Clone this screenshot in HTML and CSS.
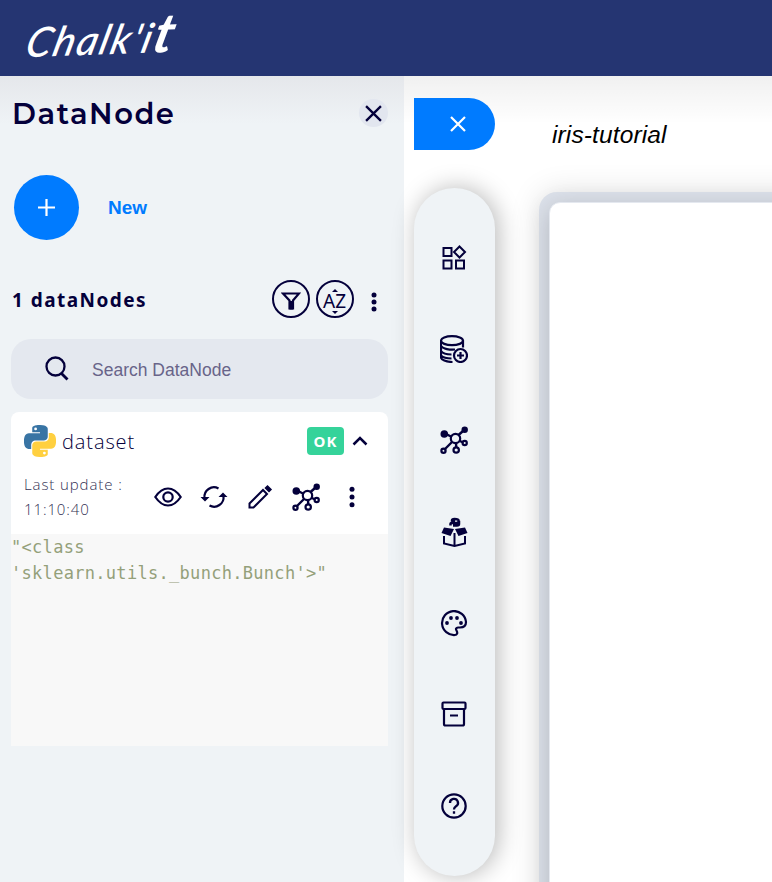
FILE: index.html
```html
<!DOCTYPE html>
<html lang="en">
<head>
<meta charset="utf-8">
<title>Chalk'it</title>
<link rel="stylesheet" href="styles.css">
</head>
<body>
<svg class="defs" aria-hidden="true">
  <symbol id="close" viewBox="0 0 16 16"><path d="M1 1l14 14M15 1L1 15"/></symbol>
  <symbol id="nodes" viewBox="0 0 28 28">
    <path d="M6 8l6 3M23 5l-5 4.500M12 16l-8 8M16 17l.3 5M19 14.500l4 2" stroke-width="2.400"/>
    <circle cx="15.500" cy="12.500" r="4.700"/><circle cx="4.300" cy="8" r="3.800" fill="currentColor" stroke="none"/><circle cx="24.700" cy="3.700" r="3.200" fill="currentColor" stroke="none"/>
    <circle cx="3.500" cy="24.800" r="2.100"/><circle cx="16.200" cy="24" r="2.700"/><circle cx="24.700" cy="17" r="2.100"/>
  </symbol>
</svg>
<header class="topbar"><div class="logo">Chalk'i<span>t</span></div></header>
<div class="workspace">
  <aside class="panel">
    <div class="panel-head"><h1>DataNode</h1><button class="close"><svg width="17" height="17"><use href="#close"/></svg></button></div>
    <div class="new-row"><button class="add"><svg width="17" height="17" viewBox="0 0 17 17"><path d="M8.500 0v17M0 8.500h17"/></svg></button><span>New</span></div>
    <div class="list-head">
      <h2>1 dataNodes</h2>
      <button class="round"><svg width="20" height="22" viewBox="0 0 20 22"><path d="M2 4.500h16l-6 7v8H8.500v-8z"/><path d="M10.200 12v8.500" stroke-width="3.500"/></svg></button>
      <button class="round sort"><i class="up"></i><b>AZ</b><i class="down"></i></button>
      <svg class="dots" width="6" height="20" viewBox="0 0 6 20"><circle cx="3" cy="3" r="2.500"/><circle cx="3" cy="10" r="2.500"/><circle cx="3" cy="17" r="2.500"/></svg>
    </div>
    <div class="search"><svg width="24" height="25" viewBox="0 0 24 25"><circle cx="10.500" cy="10.500" r="9" stroke-width="2.300"/><path d="M16.500 17.500l6 6" stroke-width="2.800"/></svg><span>Search DataNode</span></div>
    <article class="card">
      <div class="card-title">
        <svg width="32" height="32" viewBox="0 0 24 24"><g stroke="none" fill-rule="evenodd">
          <path fill="#3874a4" d="M14.250.180l.9.200.730.260.590.300.450.320.340.340.250.340.160.330.100.300.040.260.020.200-.010.130V8.500l-.050.630-.130.550-.210.460-.260.380-.300.310-.330.250-.350.190-.350.140-.330.100-.300.070-.260.040-.210.020H8.770l-.690.050-.590.140-.500.220-.410.270-.330.320-.270.350-.200.360-.150.370-.100.350-.070.320-.040.270-.020.210v3.060H3.170l-.210-.030-.280-.070-.320-.120-.350-.180-.360-.260-.360-.360-.350-.460-.320-.590-.280-.730-.210-.880-.140-1.050-.050-1.230.060-1.220.160-1.040.240-.870.320-.710.360-.570.400-.440.420-.330.420-.240.400-.160.360-.100.320-.050.240-.010h8.380v-.830H6.180l-.010-2.750-.020-.370.050-.340.110-.310.170-.280.250-.260.310-.230.380-.200.440-.180.510-.150.580-.120.640-.100.710-.060.770-.040.840-.020zM8.700 1.930a1.050 1.050 0 1 0 0 2.100a1.050 1.050 0 1 0 0-2.100z"/>
          <path fill="#ffd040" transform="rotate(180 12 12)" d="M14.250.180l.9.200.730.260.590.300.450.320.340.340.250.340.160.330.100.300.040.260.020.200-.010.130V8.500l-.050.630-.130.550-.210.460-.260.380-.300.310-.330.250-.350.190-.350.140-.330.100-.300.070-.260.040-.210.020H8.770l-.690.050-.590.140-.500.220-.410.270-.330.320-.270.350-.200.360-.150.370-.100.350-.070.320-.040.270-.020.210v3.060H3.170l-.210-.030-.280-.070-.320-.120-.350-.180-.360-.260-.360-.360-.350-.460-.320-.590-.280-.730-.210-.880-.140-1.050-.050-1.230.060-1.220.160-1.040.240-.870.320-.710.360-.570.400-.440.420-.330.420-.240.400-.160.360-.100.320-.050.240-.010h8.380v-.830H6.180l-.010-2.750-.020-.370.050-.340.110-.310.170-.280.250-.260.310-.230.380-.200.440-.180.510-.150.580-.120.640-.100.710-.060.770-.040.840-.020zM8.700 1.930a1.050 1.050 0 1 0 0 2.100a1.050 1.050 0 1 0 0-2.100z"/></g></svg>
        <span class="name">dataset</span><span class="ok">OK</span>
        <svg class="chevron" width="16" height="10" viewBox="0 0 16 10"><path d="M1.500 8.500L8 2l6.500 6.500" stroke-width="2.500"/></svg>
      </div>
      <div class="card-tools">
        <p>Last update :<br>11:10:40</p>
        <svg width="28" height="28" viewBox="0 0 28 28"><path d="M1.300 14Q7 5.500 14 5.500T26.700 14Q21 22.500 14 22.500T1.300 14z"/><circle cx="14" cy="14" r="4.700"/></svg>
        <svg width="28" height="28" viewBox="0 0 28 28"><path d="M4.500 15A9.500 9.500 0 0 1 18.500 5.500M23.500 13A9.500 9.500 0 0 1 9.500 22.500"/><path d="M.5 14h9L5 18.500zM18.500 14h9L23 9.500z" fill="currentColor" stroke="none"/></svg>
        <svg width="28" height="28" viewBox="0 0 28 28"><path d="M3.500 24.500v-4L17 7l4 4L7.500 24.500z" stroke-width="2"/><path d="M19.500 5l2-2 3.500 3.500-2 2z" fill="currentColor" stroke-width="1.500"/></svg>
        <svg width="28" height="28"><use href="#nodes"/></svg>
        <svg class="dots" width="6" height="22" viewBox="0 0 6 22"><circle cx="3" cy="3.300" r="2.500"/><circle cx="3" cy="11" r="2.500"/><circle cx="3" cy="18.700" r="2.500"/></svg>
      </div>
      <pre>"&lt;class
'sklearn.utils._bunch.Bunch'&gt;"</pre>
    </article>
  </aside>
  <nav class="rail">
    <button class="tab"><svg width="16" height="16"><use href="#close"/></svg></button>
    <div class="menu">
      <svg width="28" height="28" viewBox="0 0 28 28"><path d="M3.500 4h8v8h-8zM3.500 16.500h8v8h-8zM16 16.500h8v8h-8zM19.500 2.500l5.500 5.500-5.500 5.500L14 8z" stroke-width="2"/></svg>
      <svg width="28" height="28" viewBox="0 0 28 28"><ellipse cx="12" cy="5.700" rx="11" ry="4.500"/><path d="M1 5.500v17c0 2 5 4.500 11.500 4.500M23 5.500v7M1 11c2 3 9 4 14 3.500M1 16c2 3 7 3.500 10.500 3.500M1 20.500c2 2 6 3 10.500 3"/><circle cx="20.500" cy="20.500" r="6.500"/><path d="M20.500 17v7M17 20.500h7"/></svg>
      <svg width="28" height="28"><use href="#nodes"/></svg>
      <svg width="28" height="30" viewBox="0 0 28 30"><path d="M4 19v7.500l10.500 2.500L25 26.500V19M14.500 16v13" stroke-width="2"/><path d="M4 10.500l10 1.500-3.500 7L1.500 16zM25 10.500L15 12l3.500 7 9-3z" fill="currentColor" stroke="none"/><path d="M10.500 8.500V7q0-1 1.500-1h5q1.500 0 1.500-1.500V3.500q0-1.500-4-1.500-2.500 0-2.500 1.500h3M18.500 5h.5v2q0 1.500-2 1.500h-4" stroke-width="2.500"/></svg>
      <svg width="28" height="28" viewBox="0 0 28 28"><path d="M15 25A12 12 0 1 1 26 12c0 4-3 5.500-6 5.500h-2c-2 0-2.500 1.500-1.500 3 1.500 2.500.5 4.500-1.500 4.500z"/><g fill="currentColor" stroke="none"><circle cx="7" cy="13" r="1.900"/><circle cx="11" cy="8" r="1.900"/><circle cx="17" cy="8" r="1.900"/><circle cx="21" cy="13" r="1.900"/></g></svg>
      <svg width="28" height="28" viewBox="0 0 28 28"><rect x="2.500" y="1.500" width="23" height="6.500" rx="1"/><path d="M4 8v15q0 1.500 1.500 1.500h17q1.500 0 1.500-1.500V8M10 14.500h8"/></svg>
      <svg width="28" height="28" viewBox="0 0 28 28"><circle cx="14" cy="14" r="11.700"/><path d="M10 11a4 4 0 1 1 6 3.300c-1.500 1-2 1.400-2 3.200M14 19.200v2.500" stroke-width="2.300"/></svg>
    </div>
  </nav>
  <main class="editor"><div class="project">iris-tutorial</div><div class="board"><div class="sheet"></div></div></main>
</div>
</body>
</html>
```
FILE: styles.css
```css
* { box-sizing: border-box; }
body { margin: 0; height: 882px; overflow: hidden; display: flex; flex-direction: column; background: #fff; color: #04003b; font-family: "Liberation Sans", sans-serif; }
svg { display: block; flex: none; fill: none; stroke: currentColor; stroke-width: 2.200; }
button { padding: 0; border: 0; color: inherit; font: inherit; display: flex; align-items: center; justify-content: center; flex: none; }
.defs { position: absolute; width: 0; height: 0; }
.topbar { height: 76px; flex: none; background: #253572; color: #fff; padding: 14px 28px; }
.logo { font: italic 500 41px/46px Lato, sans-serif; white-space: nowrap; transform: rotate(-2deg) skewX(-16deg); transform-origin: left center; width: max-content; letter-spacing: 1.700px; }
.logo span { font-size: 54px; line-height: 46px; font-weight: 700; }
.workspace { height: 806px; display: flex; background: linear-gradient(#0000000f, #00000000 48px); }
.panel { width: 404px; flex: none; padding: 0 16px 0 11px; background: linear-gradient(#e5e7eb, #eff3f6 48px); }
.panel-head { height: 74px; display: flex; justify-content: space-between; }
h1 { margin: 17px 0 0 1px; font: 600 29px/42px Montserrat, Inter, sans-serif; letter-spacing: 1.550px; }
.close { margin-top: 23px; width: 29px; height: 28px; border-radius: 50%; background: #e2e6ef; }
.new-row { height: 115px; padding: 25px 3px 0; display: flex; gap: 29px; color: #007bff; font: 700 19px/65px "Liberation Sans", sans-serif; }
.add { width: 65px; height: 65px; border-radius: 50%; background: #007bff; color: #fff; }
.add svg { margin-top: -1px; }
.list-head { height: 74px; padding: 15px 11.500px 0 1px; display: flex; align-items: flex-start; }
h2 { margin: 0 auto 0 0; font: 700 19px/40px "Noto Sans", sans-serif; letter-spacing: 1.450px; }
.round { width: 38px; height: 38px; border: 2px solid #04003b; border-radius: 50%; background: none; margin-right: 6px; }
.round svg { margin-top: 2px; }
.sort { flex-direction: column; margin-right: 17px; padding-top: 4px; }
.sort b { font: 400 19px/20px "Noto Sans", sans-serif; }
.sort i { border: 3px solid transparent; }
.sort .up { border-top: 0; border-bottom-color: #04003b; margin-bottom: -1px; }
.sort .down { border-bottom: 0; border-top-color: #04003b; }
.dots { fill: currentColor; stroke: none; }
.list-head .dots { margin-top: 12px; }
.search { height: 60px; border-radius: 20px; background: #e4e8ef; display: flex; align-items: center; gap: 23px; padding-left: 34px; font-size: 17.500px; color: #686489; }
.search svg { color: #04003b; margin-top: -2px; }
.search span { padding-top: 2px; }
.card { margin-top: 13px; border-radius: 8px 8px 0 0; background: #fff; }
.card-title { height: 60px; padding: 0 20px 2px 13px; display: flex; align-items: center; }
.name { margin: 2px auto 0 6px; font: 300 20px/30px "Open Sans", sans-serif; letter-spacing: 0.900px; }
.ok { width: 37px; height: 28px; margin-right: 8px; border-radius: 4px; background: #35d39a; color: #fff; font: 700 15px/28px "Noto Sans", sans-serif; letter-spacing: 1px; text-align: center; }
.card-tools { height: 62px; padding: 0 0 12px 13px; display: flex; align-items: center; gap: 18px; }
.card-tools p { margin: 0; width: 112px; font: 300 15px/25px "Open Sans", sans-serif; letter-spacing: 0.900px; color: #333154; }
.card-tools .dots { margin-left: 11px; }
pre { height: 212px; margin: 0; background: #f8f8f8; color: #94a07a; font: 17px/26px "DejaVu Sans Mono", monospace; letter-spacing: 0.300px; }
.rail { width: 91px; flex: none; padding: 22px 0 0 10px; }
.tab { width: 81px; height: 52px; border-radius: 0 26px 26px 0; background: #007bff; color: #fff; padding-left: 7px; }
.menu { width: 81px; height: 688px; margin-top: 38px; padding: 56px 1px 56px 0; border-radius: 41px; background: #eff3f6; box-shadow: 3px 0 25px #00000048; display: flex; flex-direction: column; align-items: center; justify-content: space-between; }
.editor { width: 277px; padding-left: 44px; overflow: hidden; }
.project { height: 116px; padding: 43px 0 0 13px; font: italic 24.500px/32px "Liberation Sans", sans-serif; color: #000; letter-spacing: 0.130px; }
.board { width: 300px; height: 730px; padding: 10px; border-radius: 18px; background: #dce1ea; box-shadow: 0 0 30px #00000020; }
.sheet { height: 740px; border-radius: 11px; background: #fff; box-shadow: 0 5px 25px #00000030; border: 1px solid #e4e8ef; }
```
